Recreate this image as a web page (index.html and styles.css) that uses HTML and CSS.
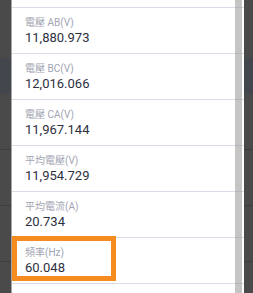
FILE: index.html
```html
<!DOCTYPE html>
<html lang="zh-Hant">
<head>
    <meta charset="UTF-8">
    <meta name="viewport" content="width=device-width, initial-scale=1.0">
    <title>Meter Readings</title>
    <link rel="stylesheet" href="styles.css">
</head>
<body>
    <div class="panel">
        <div class="list">
            <div class="row row-cut-top"></div>
            <div class="row">
                <div class="label">電壓 AB(V)</div>
                <div class="value">11,880.973</div>
            </div>
            <div class="row">
                <div class="label">電壓 BC(V)</div>
                <div class="value">12,016.066</div>
            </div>
            <div class="row">
                <div class="label">電壓 CA(V)</div>
                <div class="value">11,967.144</div>
            </div>
            <div class="row">
                <div class="label">平均電壓(V)</div>
                <div class="value">11,954.729</div>
            </div>
            <div class="row">
                <div class="label">平均電流(A)</div>
                <div class="value">20.734</div>
            </div>
            <div class="row highlight">
                <div class="label">頻率(Hz)</div>
                <div class="value">60.048</div>
            </div>
            <div class="row row-cut-bottom"></div>
        </div>
        <div class="scrollbar"></div>
    </div>
</body>
</html>
```

FILE: styles.css
```css
html, body {
    margin: 0;
    padding: 0;
    height: 100%;
    overflow: hidden;
}

body {
    font-family: Roboto, "Noto Sans CJK TC", sans-serif;
    background-color: #4a4a4a;
    background-image:
        linear-gradient(#43464c, #43464c),
        linear-gradient(#3d3d3d, #3d3d3d),
        linear-gradient(#3d3d3d, #3d3d3d),
        linear-gradient(#3d3d3d, #3d3d3d);
    background-size: 100% 36px, 100% 1px, 100% 1px, 100% 1px;
    background-position: 0 58px, 0 149px, 0 205px, 0 261px;
    background-repeat: no-repeat;
    padding: 0 9px 0 11px;
    box-sizing: border-box;
}

.panel {
    position: relative;
    height: 293px;
    overflow: hidden;
    background-color: #fff;
    border-left: 1px solid #a5a5a5;
}

.list {
    display: flex;
    flex-direction: column;
}

.row {
    position: relative;
    height: 45px;
    padding: 0 0 0 13px;
    border-bottom: 1px solid #dcdbea;
}

.row-cut-top {
    height: 7px;
}

.label {
    padding-top: 8px;
    font-size: 10px;
    line-height: 13px;
    color: #a2a4b2;
}

.value {
    padding-top: 1px;
    font-size: 13px;
    line-height: 16px;
    color: #2d3040;
}

.highlight::after {
    content: "";
    position: absolute;
    left: 0;
    top: -2px;
    width: 104px;
    height: 45px;
    border: 5px solid #f68b1f;
    box-sizing: border-box;
}

.scrollbar {
    position: absolute;
    top: 0;
    right: 2px;
    width: 7px;
    height: 100%;
    background-color: rgba(150, 150, 150, 0.55);
}
```
